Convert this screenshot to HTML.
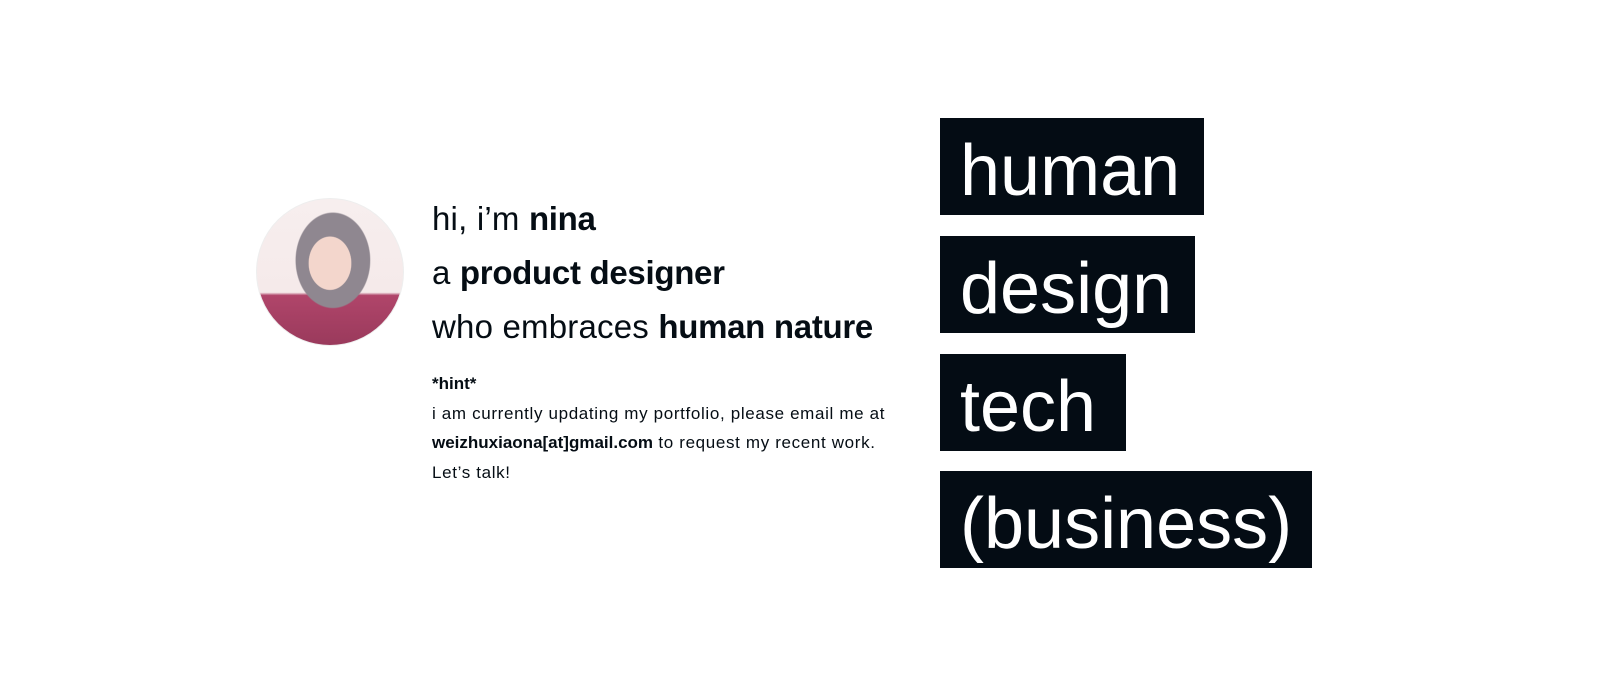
<!DOCTYPE html>
<html><head><meta charset="utf-8"><style>
body{margin:0;width:1600px;height:700px;background:#fff;position:relative;font-family:"Liberation Sans",sans-serif;color:#050d14;overflow:hidden}
.av{position:absolute;left:256px;top:198px;width:148px;height:148px;border-radius:50%;overflow:hidden;border:1px solid #eee;box-sizing:border-box;
background:radial-gradient(ellipse 24% 30% at 50% 44%,#f3d6cc 60%,transparent 62%),radial-gradient(ellipse 36% 46% at 52% 42%,#8f8790 70%,transparent 72%),linear-gradient(#f7eeee 0%,#f5eaea 64%,#b0456a 66%,#9a3a5c 100%)}
.l{position:absolute;left:432px;font-size:33px;font-weight:300;letter-spacing:0.2px;white-space:nowrap}
.l b{font-weight:700;letter-spacing:-0.3px}
.h{position:absolute;left:432px;top:369px;font-size:17px;line-height:29.5px;letter-spacing:0.65px;white-space:nowrap}
.h b{letter-spacing:0px}
.bx{position:absolute;left:940px;height:97px;background:#040c14;color:#fff;font-size:72px;line-height:106px;padding-left:20px;box-sizing:border-box;white-space:nowrap;font-weight:300;overflow:hidden}
</style></head><body>
<div class="av"></div>
<div class="l" style="top:200px">hi, i’m <b>nina</b></div>
<div class="l" style="top:254px">a <b>product designer</b></div>
<div class="l" style="top:308px">who embraces <b>human nature</b></div>
<div class="h"><b>*hint*</b><br>i am currently updating my portfolio, please email me at<br><b>weizhuxiaona[at]gmail.com</b> to request my recent work.<br>Let’s talk!</div>
<div class="bx" style="top:118px;width:264px">human</div>
<div class="bx" style="top:236px;width:255px">design</div>
<div class="bx" style="top:354px;width:186px">tech</div>
<div class="bx" style="top:471px;width:372px">(business)</div>
</body></html>
